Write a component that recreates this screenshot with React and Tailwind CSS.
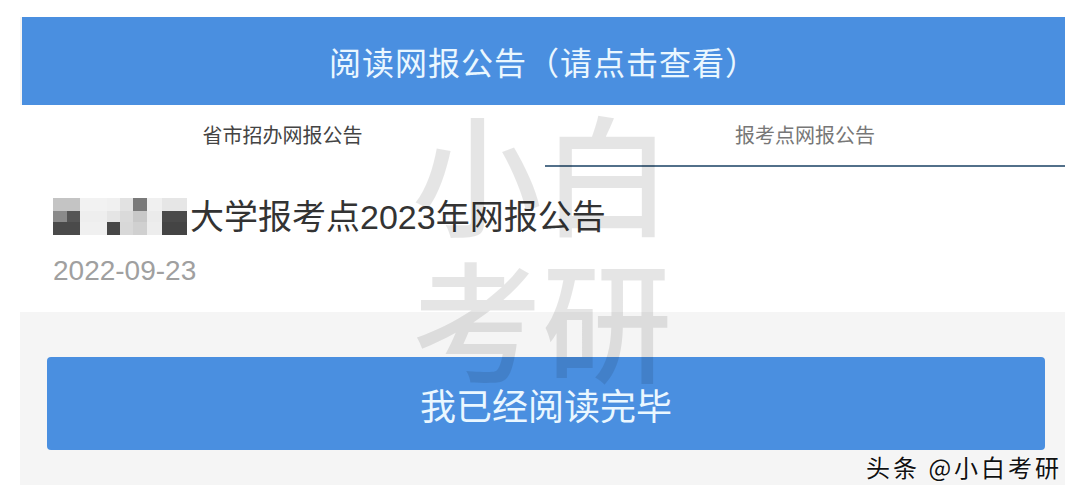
import React from "react";

const cjk = { fontFamily: '"Noto Sans CJK SC", "Noto Sans", sans-serif' };
const mixed = { fontFamily: '"Liberation Sans", "Noto Sans CJK SC", sans-serif' };

// pixelated (mosaic) school name: [width, top, middle, bottom]
const mosaic = [
  [14, "#c4c4c4", "#8a8a8a", "#4a4a4a"],
  [13, "#c4c4c4", "#555555", "#4a4a4a"],
  [27, "#f2f2f2", "#eeeeee", "#f0f0f0"],
  [13, "#f0f0f0", "#e5e5e5", "#474747"],
  [13, "#e2e2e2", "#dadada", "#d8d8d8"],
  [14, "#7a7a7a", "#c8c8c8", "#d0d0d0"],
  [15, "#f0f0f0", "#ebebeb", "#ededed"],
  [25, "#e6e6e6", "#4a4a4a", "#444444"],
];

function Mosaic() {
  return (
    <span className="flex mr-[3px]">
      {mosaic.map(([w, a, b, c], i) => (
        <span key={i} className="flex flex-col" style={{ width: w }}>
          <span className="h-[13px]" style={{ background: a }} />
          <span className="h-[11px]" style={{ background: b }} />
          <span className="h-[13px]" style={{ background: c }} />
        </span>
      ))}
    </span>
  );
}

export default function App() {
  return (
    <div className="relative w-[1080px] h-[500px] bg-white overflow-hidden" style={cjk}>
      <div className="ml-[20px] mt-[17px] w-[1045px] h-[468px] flex flex-col bg-[#f5f5f5]">
        {/* header */}
        <div className="h-[88px] ml-[2px] bg-[#4a8fe0] flex items-center justify-center">
          <span className="text-[32px] text-[#eaf7ff] tracking-[1px]">阅读网报公告（请点击查看）</span>
        </div>

        {/* tabs */}
        <div className="h-[62px] bg-white flex">
          <div className="w-[525px] flex items-center justify-center pb-[2px]">
            <span className="text-[20px] text-[#444]">省市招办网报公告</span>
          </div>
          <div className="flex-1 flex items-center justify-center border-b-2 border-[#52708a]">
            <span className="text-[20px] text-[#777]">报考点网报公告</span>
          </div>
        </div>

        {/* item */}
        <div className="h-[145px] bg-white pl-[33px] pt-[31px]">
          <div className="flex items-center text-[34px] text-[#333] leading-none" style={mixed}>
            <Mosaic />
            <span>大学报考点2023年网报公告</span>
          </div>
          <div className="mt-[22px] text-[28px] text-[#a0a0a0] leading-none" style={mixed}>
            2022-09-23
          </div>
        </div>

        {/* button */}
        <div className="flex-1 px-[27px] pt-[45px]">
          <button className="w-[998px] h-[93px] rounded-[4px] bg-[#4a8fe0] flex items-center justify-center">
            <span className="text-[36px] text-[#eaf7ff]" style={cjk}>我已经阅读完毕</span>
          </button>
        </div>
      </div>

      {/* big watermark */}
      <div className="absolute left-[412px] top-[96px] w-[272px] text-[130px] leading-[146px] font-medium text-black/[0.1] pointer-events-none" style={cjk}>
        <div>小白</div>
        <div>考研</div>
      </div>

      {/* source watermark */}
      <div
        className="absolute left-[866px] top-[455px] text-[24px] tracking-[3px] text-[#111] leading-none whitespace-nowrap"
        style={{ ...cjk, textShadow: "0 0 2px #fff, 0 0 2px #fff" }}
      >
        头条 @小白考研
      </div>
    </div>
  );
}
